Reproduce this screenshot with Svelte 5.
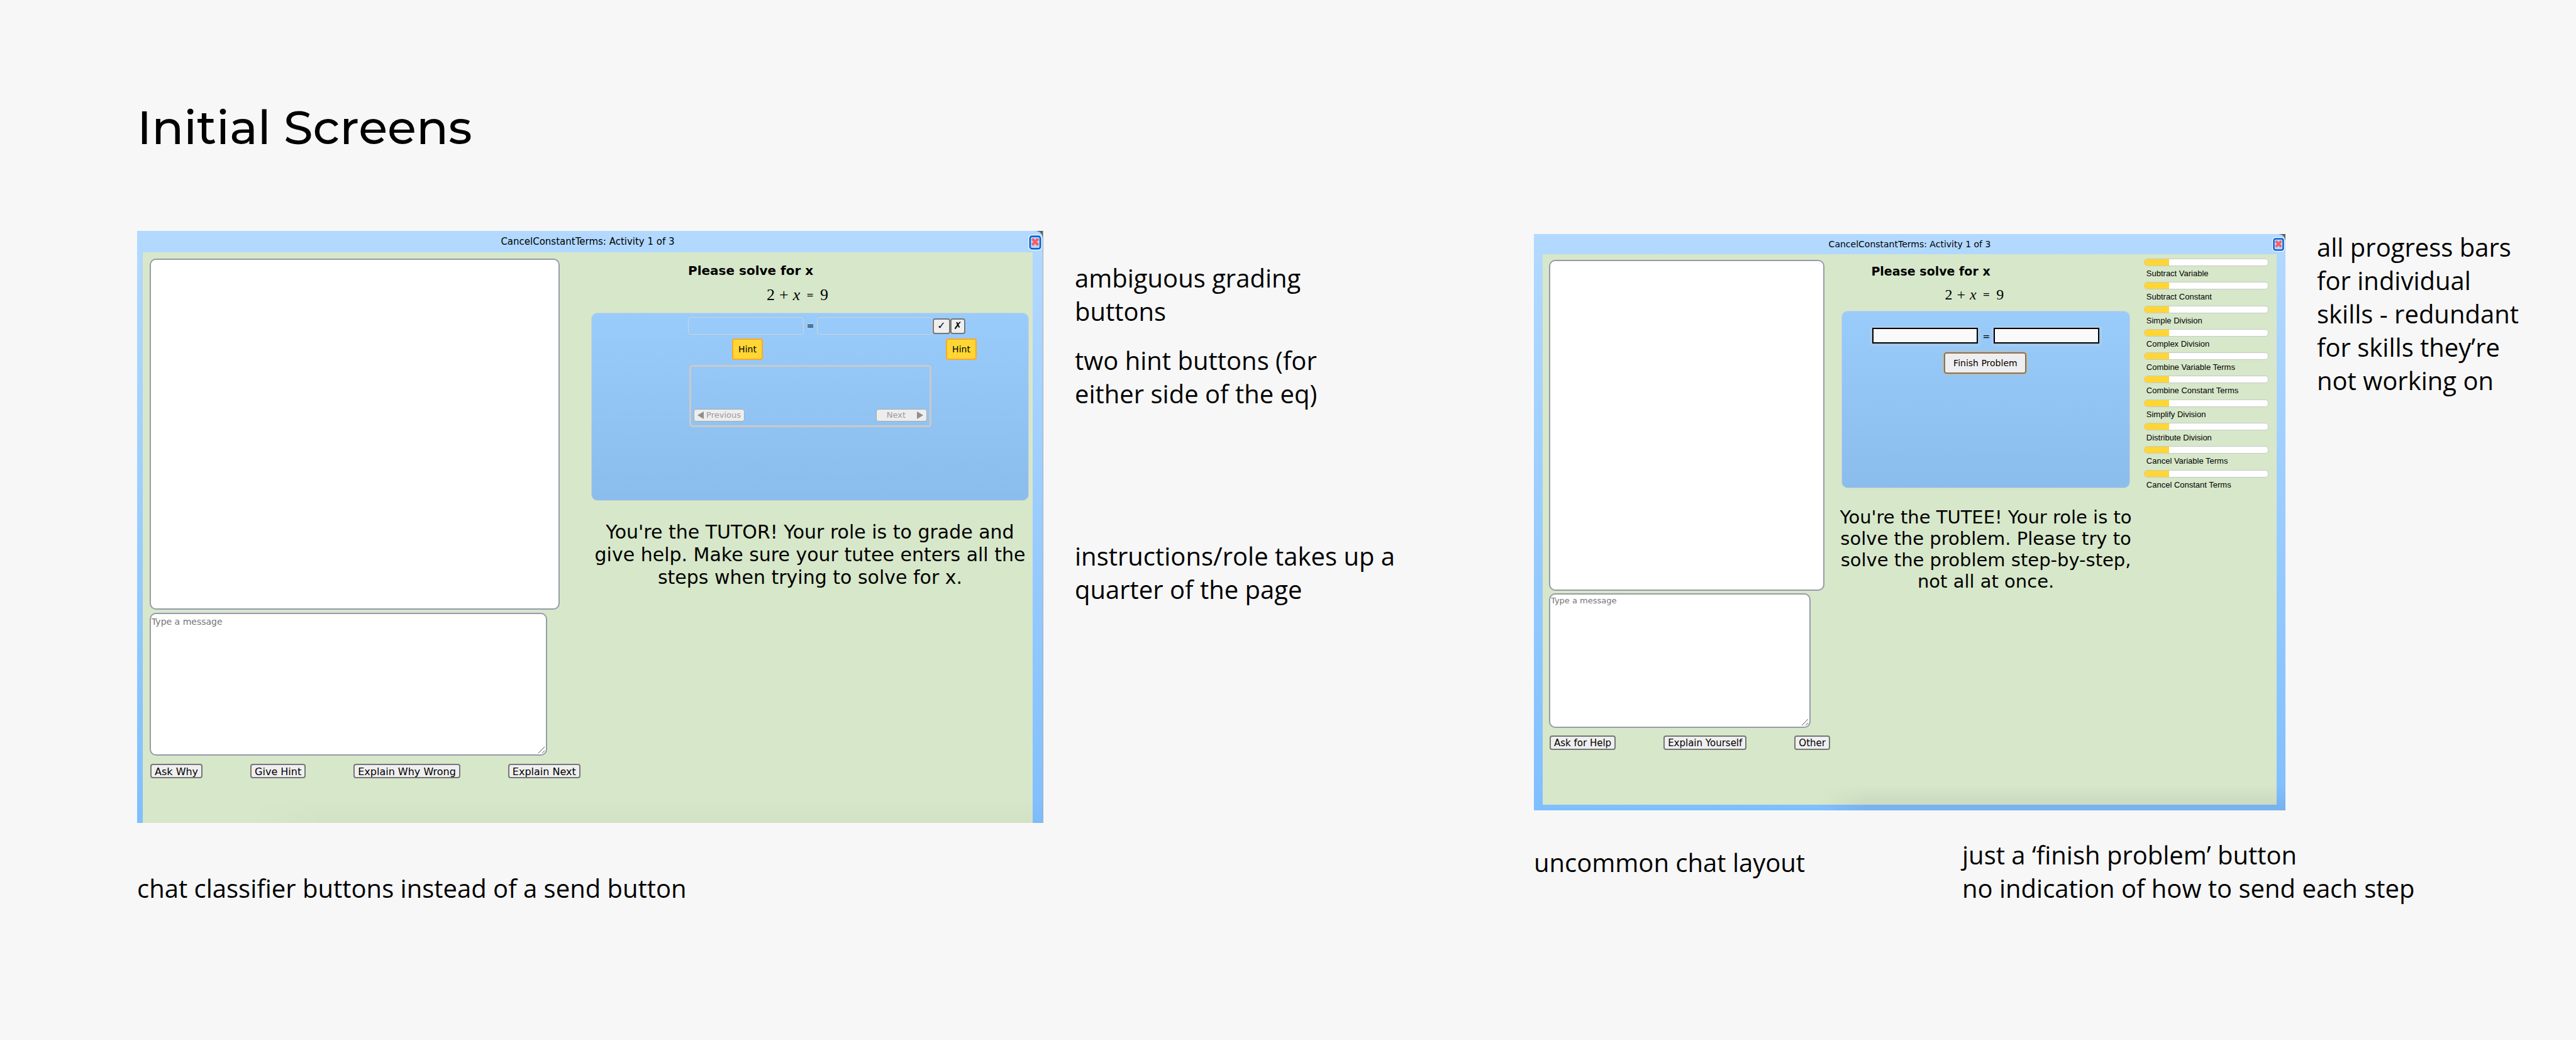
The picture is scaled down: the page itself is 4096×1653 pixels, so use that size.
<script>
  const skills = [
    'Subtract Variable',
    'Subtract Constant',
    'Simple Division',
    'Complex Division',
    'Combine Variable Terms',
    'Combine Constant Terms',
    'Simplify Division',
    'Distribute Division',
    'Cancel Variable Terms',
    'Cancel Constant Terms'
  ].map((name) => ({ name, value: 20 }));

  const tutorReplies = ['Ask Why', 'Give Hint', 'Explain Why Wrong', 'Explain Next'];
  const tuteeReplies = ['Ask for Help', 'Explain Yourself', 'Other'];
</script>

{#snippet closeButton()}
  <button class="close" aria-label="Close">
    <svg viewBox="0 0 36 41" aria-hidden="true">
      <rect x="0" y="0" width="36" height="41" rx="10" fill="#fff" />
      <rect x="4.5" y="4.5" width="27" height="32" rx="5" fill="#b4d6fa" stroke="#1062cf" stroke-width="4.5" />
      <path d="M10.5 11l15 16M25.5 11l-15 16" stroke="#e8505c" stroke-width="6.5" fill="none" />
      <path d="M10.5 11l15 16M25.5 11l-15 16" stroke="#ff5d66" stroke-width="4.5" fill="none" />
    </svg>
  </button>
{/snippet}

{#snippet chat(id, replies)}
  <div class="chat">
    <div class="log"></div>
    <div class="compose">
      <textarea {id} aria-label="Message" placeholder="Type a message"></textarea>
      <svg class="grip" viewBox="0 0 12 12" aria-hidden="true">
        <path d="M1 11L11 1M7 11L11 7" stroke="#555" stroke-width="1" fill="none" />
      </svg>
    </div>
    <div class="replies">
      {#each replies as reply}
        <button class="plain">{reply}</button>
      {/each}
    </div>
  </div>
{/snippet}

{#snippet problem()}
  <h2>Please solve for x</h2>
  <p class="equation">
    <span>2</span><span>+</span><i>x</i><span class="eq">=</span><span>9</span>
  </p>
{/snippet}

<main>
  <h1>Initial Screens</h1>

  <div class="boards">
    <section class="board tutor">
      <div class="shot">
        <header><span>CancelConstantTerms: Activity 1 of 3</span>{@render closeButton()}</header>
        <div class="body">
          {@render chat('tutor-message', tutorReplies)}
          <div class="task">
            {@render problem()}
            <div class="panel">
              <div class="row">
                <input class="flat" aria-label="Left side" disabled />
                <span class="eq">=</span>
                <input class="flat" aria-label="Right side" disabled />
                <button class="grade yes" aria-label="Correct">✓</button>
                <button class="grade no" aria-label="Incorrect">✗</button>
              </div>
              <div class="hints">
                <button class="hint">Hint</button>
                <button class="hint">Hint</button>
              </div>
              <div class="hintbox">
                <button class="nav" disabled>
                  <svg viewBox="0 0 10 12" aria-hidden="true"><path d="M10 0v12L0 6z" /></svg>Previous
                </button>
                <button class="nav next" disabled>
                  Next<svg viewBox="0 0 10 12" aria-hidden="true"><path d="M0 0v12l10-6z" /></svg>
                </button>
              </div>
            </div>
            <p class="role">
              You're the TUTOR! Your role is to grade and give help. Make sure your tutee enters all the
              steps when trying to solve for x.
            </p>
          </div>
        </div>
      </div>
      <div class="side">
        <p>ambiguous grading<br />buttons</p>
        <p>two hint buttons (for<br />either side of the eq)</p>
        <p class="far">instructions/role takes up a<br />quarter of the page</p>
      </div>
      <div class="below">
        <p>chat classifier buttons instead of a send button</p>
      </div>
    </section>

    <section class="board tutee">
      <div class="shot">
        <header><span>CancelConstantTerms: Activity 1 of 3</span>{@render closeButton()}</header>
        <div class="body">
          {@render chat('tutee-message', tuteeReplies)}
          <div class="task">
            {@render problem()}
            <div class="panel">
              <div class="row">
                <span class="frame"><input aria-label="Left side" /></span>
                <span class="eq">=</span>
                <span class="frame"><input aria-label="Right side" /></span>
              </div>
              <button class="finish">Finish Problem</button>
            </div>
            <p class="role">
              You're the TUTEE! Your role is to solve the problem. Please try to solve the problem
              step-by-step, not all at once.
            </p>
          </div>
          <ul class="skills">
            {#each skills as skill}
              <li>
                <div class="bar"><div class="fill" style="width: {skill.value}%"></div></div>
                <span>{skill.name}</span>
              </li>
            {/each}
          </ul>
        </div>
      </div>
      <div class="side">
        <p>all progress bars<br />for individual<br />skills - redundant<br />for skills they’re<br />not working on</p>
      </div>
      <div class="below">
        <p>uncommon chat layout</p>
        <p>just a ‘finish problem’ button<br />no indication of how to send each step</p>
      </div>
    </section>
  </div>
</main>

<style>
  :global(body) {
    margin: 0;
    background: #f7f7f7;
  }

  main {
    box-sizing: border-box;
    min-height: 100vh;
    padding: 154px 0 0 218px;
    color: #000;
    font-family: 'Open Sans', 'Noto Sans', sans-serif;
    font-size: 40px;
    line-height: 53px;
  }

  h1,
  h2,
  p,
  ul {
    margin: 0;
    padding: 0;
    list-style: none;
  }

  h1 {
    font: 500 75px/96px Montserrat, 'DejaVu Sans', sans-serif;
  }

  button,
  input,
  textarea {
    box-sizing: border-box;
    margin: 0;
    padding: 0;
    color: inherit;
    font: inherit;
  }

  .boards {
    display: grid;
    grid-template-columns: 2221fr 1657fr;
    align-items: start;
    margin-top: 117px;
  }

  .board {
    display: grid;
    align-items: start;
  }

  .tutor {
    grid-template-columns: 1441fr 780fr;
  }

  .tutee {
    grid-template-columns: 1195fr 462fr;
    padding-top: 5px;
  }

  .shot {
    position: relative;
    min-width: 0;
    background:
      radial-gradient(circle at 0 100%, transparent 9px, #56616b 10px) top right / 10px 10px no-repeat,
      linear-gradient(#b3d9ff, #80bfff);
    font-family: 'DejaVu Sans', sans-serif;
    font-size: 16px;
    line-height: 20px;
  }

  /* soft shade along the lower edge */
  .shot::after {
    content: '';
    position: absolute;
    right: 0;
    bottom: 0;
    left: 12%;
    height: 40px;
    background: linear-gradient(transparent, rgba(0, 0, 0, 0.02));
    mask-image: linear-gradient(to right, transparent, #000 10%);
    pointer-events: none;
  }

  .tutee .shot::after {
    left: 38%;
    background: linear-gradient(transparent, rgba(0, 0, 0, 0.07));
  }

  .tutor .shot {
    padding: 0 16px 0 9px;
    border-right: 1px solid #a9adb2;
  }

  .tutee .shot {
    padding: 0 14px 9px;
  }

  header {
    position: relative;
    display: flex;
    align-items: center;
    justify-content: center;
    height: 34px;
    font-size: 15px;
  }

  .tutee header {
    height: 32px;
    font-size: 14px;
  }

  .close {
    position: absolute;
    top: 6px;
    right: -15px;
    width: 22px;
    height: 25px;
    border: 0;
    background: none;
  }

  .tutee .close {
    top: 5px;
    right: -13px;
    width: 20px;
    height: 23px;
  }

  .close svg {
    display: block;
    width: 100%;
    height: 100%;
  }

  .body {
    display: grid;
    align-items: start;
    background: #d7e7ca;
  }

  .tutor .body {
    grid-template-columns: 652fr 696fr;
    column-gap: 50px;
    padding: 10px 6px 71px 11px;
  }

  .tutee .body {
    grid-template-columns: 438fr 507fr 198fr;
    padding: 9px 13px 87px 10px;
  }

  .chat,
  .task {
    min-width: 0;
  }

  .log,
  textarea {
    display: block;
    box-sizing: border-box;
    border: 2px solid #969ba8;
    border-radius: 10px;
    background: #fff;
  }

  .log {
    height: 558px;
    margin-bottom: 5px;
  }

  .compose {
    position: relative;
    width: 97%;
  }

  textarea {
    width: 100%;
    height: 227px;
    padding: 2px 1px;
    font-size: 14px;
    resize: none;
  }

  textarea::placeholder {
    color: #757575;
    opacity: 1;
  }

  .grip {
    position: absolute;
    right: 3px;
    bottom: 3px;
    width: 12px;
    height: 12px;
  }

  .tutee .log {
    height: 526px;
    margin-bottom: 4px;
  }

  .tutee .compose {
    width: 95%;
  }

  .tutee textarea {
    height: 214px;
    padding: 0 1px;
    font-size: 13px;
  }

  .replies {
    display: flex;
    gap: 76px;
    margin: 13px 0 0 1px;
    white-space: nowrap;
  }

  .tutee .replies {
    margin-top: 12px;
    font-size: 15px;
  }

  .plain {
    flex: none;
    height: 23px;
    padding: 0 5px;
    border: 2px solid #767676;
    border-radius: 4px;
    background: #efefef;
    line-height: 21px;
  }

  h2 {
    font-size: 20px;
    line-height: 24px;
  }

  .equation {
    display: flex;
    gap: 7px;
    font-family: 'Liberation Serif', serif;
    font-size: 26px;
    line-height: 32px;
  }

  .eq {
    font-family: 'DejaVu Sans', sans-serif;
    font-size: 14px;
    text-align: center;
  }

  .equation .eq {
    margin: 0 3px;
  }

  .panel {
    box-sizing: border-box;
    border: 1px solid #cdd0d6;
    border-radius: 10px;
    background: linear-gradient(#99ccfb, #8bbdec);
  }

  .row {
    display: flex;
    align-items: center;
  }

  .row .eq {
    width: 21px;
  }

  .role {
    text-align: center;
  }

  .tutor .task {
    padding-top: 7px;
  }

  .tutor h2 {
    padding-left: 154px;
  }

  .tutor .equation {
    margin: 11px 0 12px;
    padding-left: 279px;
  }

  .tutor .panel {
    height: 299px;
    padding: 6px 0 0 153px;
  }

  .tutor .role {
    margin-top: 32px;
    font-size: 30px;
    line-height: 36px;
  }

  .flat {
    width: 184px;
    height: 28px;
    border: 1px solid #d3d3d3;
    border-radius: 4px;
    background: transparent;
  }

  .grade {
    width: 28px;
    height: 25px;
    border: 2px solid #767676;
    border-radius: 4px;
    background: #efefef;
    font-size: 16px;
    font-weight: bold;
    line-height: 20px;
  }

  .no {
    width: 24px;
  }

  .hints {
    display: flex;
    gap: 291px;
    margin: 6px 0 8px;
    padding-left: 70px;
  }

  .hint {
    width: 49px;
    height: 34px;
    border: 2px solid #ffa726;
    border-radius: 4px;
    background: #ffd633;
    font-size: 14px;
  }

  .hintbox {
    display: flex;
    box-sizing: border-box;
    align-items: flex-end;
    justify-content: space-between;
    width: 385px;
    height: 99px;
    margin-left: 2px;
    padding: 0 4px 6px;
    border: 3px solid #c9c9c9;
    border-radius: 5px;
  }

  .nav {
    display: flex;
    align-items: center;
    justify-content: center;
    gap: 4px;
    width: 81px;
    height: 20px;
    border: 1px solid #aaa;
    border-radius: 4px;
    background: #ededed;
    color: #9b9b9b;
    font-size: 13px;
    line-height: 16px;
  }

  .next {
    justify-content: flex-end;
    gap: 18px;
    padding-right: 5px;
  }

  .nav svg {
    flex: none;
    width: 10px;
    height: 12px;
    fill: #8f8f8f;
  }

  .tutee .task {
    margin: 0 22px 0 27px;
    padding-top: 6px;
  }

  .tutee h2 {
    padding-left: 47px;
    font-size: 19px;
  }

  .tutee .equation {
    margin: 9px 0 10px;
    padding-left: 164px;
    font-size: 24px;
  }

  .tutee .panel {
    height: 282px;
    padding: 24px 0 0 45px;
  }

  .tutee .row .eq {
    width: 18px;
  }

  .frame {
    box-sizing: border-box;
    width: 175px;
    height: 31px;
    padding: 1px 3px 3px 2px;
    border: 1px solid #c8cbd4;
    border-radius: 4px;
  }

  .frame input {
    display: block;
    width: 100%;
    height: 25px;
    border: 2px solid #000;
    background: #fafafa;
  }

  .finish {
    display: block;
    width: 131px;
    height: 34px;
    margin: 10px 0 0 117px;
    border: 2px solid #767676;
    border-radius: 4px;
    outline: 1px solid #ffa726;
    background: #efefef;
    font-size: 14px;
  }

  .tutee .role {
    margin: 29px -8px 0;
    font-size: 29px;
    line-height: 34px;
  }

  .skills {
    display: grid;
    grid-template-rows: repeat(10, 1fr);
    height: 373px;
    margin-top: -2px;
    font-family: 'Liberation Sans', sans-serif;
    font-size: 13px;
    line-height: 16px;
  }

  .bar {
    box-sizing: border-box;
    height: 12px;
    margin-bottom: 4px;
    border: 1px solid #c9c9c9;
    border-radius: 5px;
    background: #fff;
    overflow: hidden;
  }

  .fill {
    height: 100%;
    background: #ffd633;
  }

  .skills span {
    display: block;
    padding-left: 4px;
  }

  .side {
    padding: 48px 0 0 50px;
  }

  .side p + p {
    margin-top: 25px;
  }

  .side .far {
    margin-top: 205px;
  }

  .below {
    grid-column: 1 / -1;
    padding-top: 77px;
  }

  .tutee .side {
    padding-top: 0;
    margin-top: -6px;
  }

  .tutee .below {
    display: grid;
    grid-template-columns: 681fr 976fr;
    padding-top: 44px;
  }

  .tutee .below p:first-child {
    padding-top: 12px;
  }
</style>
